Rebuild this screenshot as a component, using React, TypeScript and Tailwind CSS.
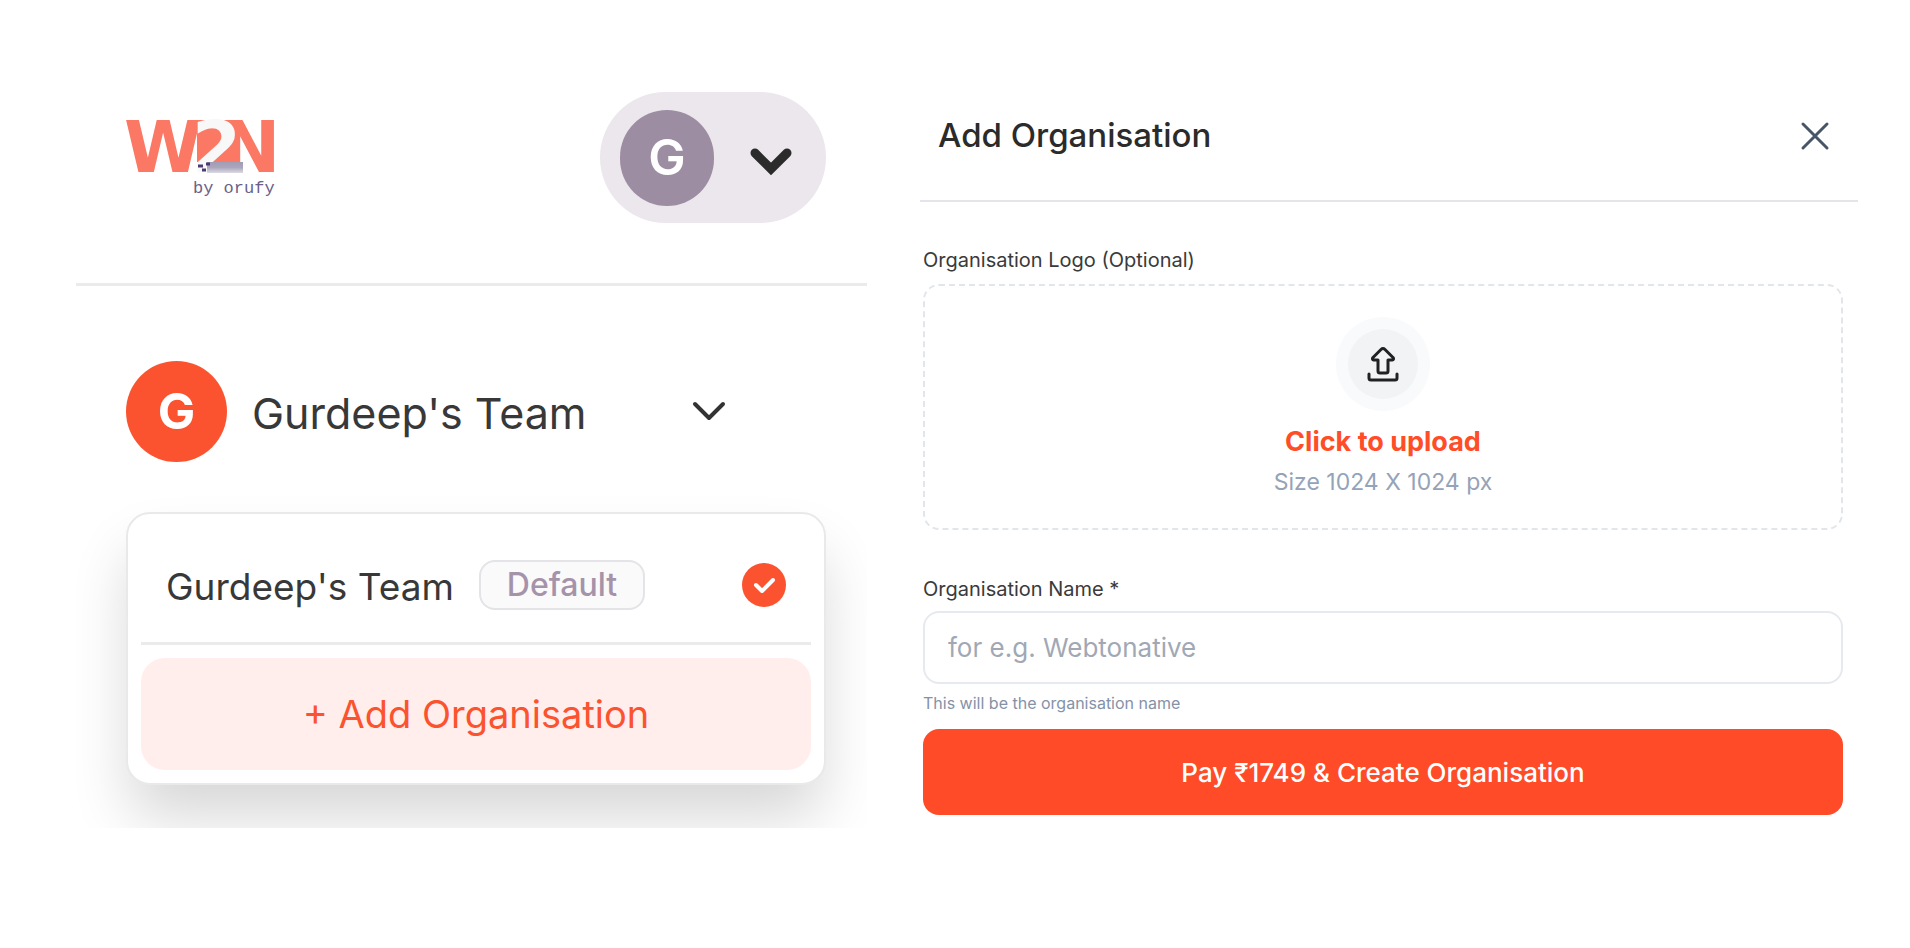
import React, { useState } from 'react';

const Logo = () => (
    <svg width="160" height="98" viewBox="-6 -20 160 98" role="img" aria-label="W2N by orufy">
        <defs>
            <linearGradient id="underline" x1="0" y1="0" x2="0" y2="1">
                <stop offset="0" stopColor="#a19cb4" />
                <stop offset="0.5" stopColor="#aaa6bb" />
                <stop offset="1" stopColor="#dddbe4" />
            </linearGradient>
        </defs>
        <g fontFamily="DejaVu Sans, sans-serif" fontWeight="700" fontSize="71">
            <text x="-2" y="52" fill="#fb7864">W</text>
            <rect x="71" y="0" width="40" height="44" fill="#fb7864" />
            <text x="95" y="52" fill="#fb7864">N</text>
            <rect x="68" y="42" width="49" height="11" fill="#ffffff" />
            <text x="66" y="52" fill="#f8f8f8">2</text>
        </g>
        <rect x="81" y="42" width="36" height="11" fill="url(#underline)" />
        <path d="M72 46h5M76 50h4M80 44h4" stroke="#4a3b72" strokeWidth="3" />
        <text x="67" y="73" fontFamily="Liberation Mono, monospace" fontSize="17" fill="#6b5f88">by orufy</text>
    </svg>
);

function OrgSwitcher() {
    return (
        <section className="h-[752px] overflow-hidden">
            <header className="flex h-[210px] items-start justify-between border-b-3 border-[#ebebeb] pl-11 pr-[41px]">
                <a href="#" className="mt-6">
                    <Logo />
                </a>
                <button
                    type="button"
                    aria-label="Account menu"
                    className="mt-4 flex h-[131px] items-center gap-9 rounded-full bg-[#ebe7ec] pl-5 pr-[34px]"
                >
                    <span className="flex h-24 w-[94px] items-center justify-center rounded-full bg-[#9d8da2] text-[50px] font-semibold text-white">
                        G
                    </span>
                    <svg width="42" height="36" viewBox="0 0 42 36" fill="none" stroke="#2b2b2b" strokeWidth="9" strokeLinecap="round">
                        <path d="M5 13l16 16L37 13" />
                    </svg>
                </button>
            </header>

            <div className="pl-[50px] pr-[41px]">
                <button type="button" className="mt-[75px] flex w-[632px] items-center text-left">
                    <span className="flex size-[101px] items-center justify-center rounded-full bg-[#fb532f] text-[50px] font-bold text-white">
                        G
                    </span>
                    <span className="ml-[25px] pt-1 text-[43px] text-[#383838]">Gurdeep's Team</span>
                    <svg className="ml-auto mr-8" width="34" height="22" viewBox="0 0 34 22" fill="none" stroke="#333333" strokeWidth="4" strokeLinecap="round" strokeLinejoin="round">
                        <path d="M3 3l14 14L31 3" />
                    </svg>
                </button>

                <div className="mt-[50px] rounded-3xl border-2 border-[#e9e9e9] bg-white p-[13px] shadow-[0_36px_60px_-4px_rgba(0,0,0,0.16)]">
                    <button type="button" className="flex h-[118px] w-full items-center border-b-3 border-[#ebebeb] px-[25px] text-left">
                        <span className="pt-1 text-[37px] text-[#383838]">Gurdeep's Team</span>
                        <span className="ml-[25px] flex h-[50px] items-center rounded-2xl border-2 border-[#e4e3e8] bg-[#fafafa] px-[26px] text-[32px] font-medium text-[#a593aa]">
                            Default
                        </span>
                        <svg className="ml-auto" width="44" height="44" viewBox="0 0 44 44" fill="none">
                            <circle cx="22" cy="22" r="22" fill="#fb532f" />
                            <path d="M14 22l6 6 11-11" stroke="#ffffff" strokeWidth="4" strokeLinecap="round" strokeLinejoin="round" />
                        </svg>
                    </button>
                    <button type="button" className="mt-[13px] h-[112px] w-full rounded-3xl bg-[#ffeeeb] text-[38px] text-[#fb532f]">
                        + Add Organisation
                    </button>
                </div>
            </div>
        </section>
    );
}

function AddOrganisation() {
    const [name, setName] = useState('');

    const handleSubmit = (e: React.FormEvent) => {
        e.preventDefault();
    };

    return (
        <section>
            <header className="flex h-[126px] items-center justify-between border-b-2 border-[#e5e4ec] pb-1 pl-[18px] pr-7">
                <h1 className="text-[33px] font-medium text-[#2b2b2b]">Add Organisation</h1>
                <button type="button" aria-label="Close">
                    <svg width="30" height="30" viewBox="0 0 30 30" fill="none" stroke="#475569" strokeWidth="3" strokeLinecap="round">
                        <path d="M3 3l24 24M27 3L3 27" />
                    </svg>
                </button>
            </header>

            <form onSubmit={handleSubmit} className="pl-[3px] pr-[15px] pt-11">
                <label htmlFor="logo" className="block text-xl/7 text-[#3a3a3a]">Organisation Logo (Optional)</label>
                <label
                    htmlFor="logo"
                    className="mt-[10px] flex h-[246px] flex-col items-center rounded-2xl border-2 border-dashed border-[#e2e6ea] pt-[31px]"
                >
                    <span className="flex size-[94px] items-center justify-center rounded-full bg-[#f9fafc]">
                        <span className="flex size-[70px] items-center justify-center rounded-full bg-[#f2f3f5]">
                            <svg width="32" height="36" viewBox="0 0 32 36" fill="none" stroke="#1f2223" strokeWidth="3" strokeLinecap="round" strokeLinejoin="round">
                                <path d="M14 3.5L6 11.5q-1.500 2 1 2.500h4v11q0 2 2 2h6q2 0 2-2v-11h4q2.500-.5 1-2.500L18 3.500q-2-2-4 0z" />
                                <path d="M2 28v4q0 2 2 2h24q2 0 2-2v-4" />
                            </svg>
                        </span>
                    </span>
                    <span className="mt-[13px] text-[27px]/9 font-bold text-[#ff4d27]">Click to upload</span>
                    <span className="mt-1 text-[23px]/9 text-[#94a3b8]">Size 1024 X 1024 px</span>
                </label>
                <input id="logo" type="file" accept="image/*" className="sr-only" />

                <label htmlFor="org-name" className="mt-[45px] block text-xl/7 text-[#3a3a3a]">
                    Organisation Name *
                </label>
                <input
                    id="org-name"
                    value={name}
                    onChange={(e) => setName(e.target.value)}
                    placeholder="for e.g. Webtonative"
                    aria-describedby="org-name-hint"
                    className="mt-2 h-[73px] w-full rounded-2xl border-2 border-[#e6e9ee] px-[23px] text-[26px] text-[#2b2b2b] placeholder:text-[#a1a8b5]"
                />
                <p id="org-name-hint" className="mt-[7px] text-base/6 text-[#8492a8]">This will be the organisation name</p>
                <button type="submit" className="mt-[14px] h-[86px] w-full rounded-2xl bg-[#ff4b27] text-[26px] font-medium text-white">
                    Pay ₹1749 & Create Organisation
                </button>
            </form>
        </section>
    );
}

export default function App() {
    return (
        <main className="grid min-h-screen grid-cols-[791fr_938fr] content-start gap-[53px] bg-white pb-16 pl-[76px] pr-[52px] pt-[76px] font-['Inter',sans-serif]">
            <OrgSwitcher />
            <AddOrganisation />
        </main>
    );
}
